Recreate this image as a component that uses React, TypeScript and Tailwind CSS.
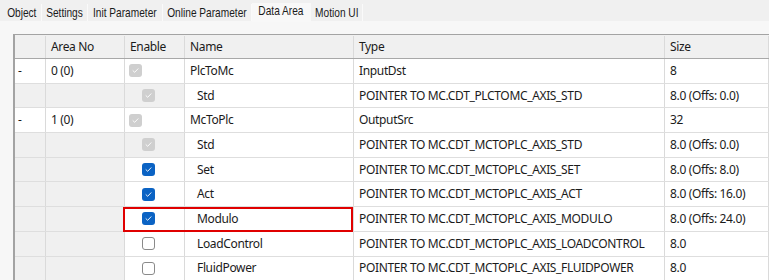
import React from "react";

type Check = "dis" | "on" | "off";

type Row = {
  dash: string;
  area: string;
  check: Check;
  sub: boolean;
  name: string;
  type: string;
  size: string;
  mark?: boolean;
};

const rows: Row[] = [
  { dash: "-", area: "0 (0)", check: "dis", sub: false, name: "PlcToMc", type: "InputDst", size: "8" },
  { dash: "", area: "", check: "dis", sub: true, name: "Std", type: "POINTER TO MC.CDT_PLCTOMC_AXIS_STD", size: "8.0 (Offs: 0.0)" },
  { dash: "-", area: "1 (0)", check: "dis", sub: false, name: "McToPlc", type: "OutputSrc", size: "32" },
  { dash: "", area: "", check: "dis", sub: true, name: "Std", type: "POINTER TO MC.CDT_MCTOPLC_AXIS_STD", size: "8.0 (Offs: 0.0)" },
  { dash: "", area: "", check: "on", sub: true, name: "Set", type: "POINTER TO MC.CDT_MCTOPLC_AXIS_SET", size: "8.0 (Offs: 8.0)" },
  { dash: "", area: "", check: "on", sub: true, name: "Act", type: "POINTER TO MC.CDT_MCTOPLC_AXIS_ACT", size: "8.0 (Offs: 16.0)" },
  { dash: "", area: "", check: "on", sub: true, name: "Modulo", type: "POINTER TO MC.CDT_MCTOPLC_AXIS_MODULO", size: "8.0 (Offs: 24.0)", mark: true },
  { dash: "", area: "", check: "off", sub: true, name: "LoadControl", type: "POINTER TO MC.CDT_MCTOPLC_AXIS_LOADCONTROL", size: "8.0" },
  { dash: "", area: "", check: "off", sub: true, name: "FluidPower", type: "POINTER TO MC.CDT_MCTOPLC_AXIS_FLUIDPOWER", size: "8.0" },
  { dash: "", area: "", check: "off", sub: true, name: "", type: "", size: "" },
];

const tabs = [
  { label: "Object", w: "w-[39px]" },
  { label: "Settings", w: "w-[46px]" },
  { label: "Init Parameter", w: "w-[75px]" },
  { label: "Online Parameter", w: "w-[89px]" },
  { label: "Data Area", w: "w-[59px]" },
  { label: "Motion UI", w: "w-[52px]" },
];

const cell = "flex items-center border-r border-[#dadada] px-[5px] whitespace-nowrap overflow-hidden";

function CheckBox({ kind }: { kind: Check }) {
  if (kind === "off") {
    return <span className="block w-[13px] h-[13px] rounded-[3px] border border-[#8a8a8a] bg-white" />;
  }
  const bg = kind === "on" ? "bg-[#0b63c4]" : "bg-[#cfcfcf]";
  return (
    <span className={`flex items-center justify-center w-[13px] h-[13px] rounded-[3px] ${bg}`}>
      <svg width="9" height="9" viewBox="0 0 9 9" fill="none">
        <path d="M2 4.7 L3.7 6.3 L7 2.8" stroke="#ffffff" strokeWidth="0.9" strokeLinecap="round" strokeLinejoin="round" />
      </svg>
    </span>
  );
}

export default function App() {
  return (
    <div className="w-[769px] h-[280px] overflow-hidden bg-[#f0f0f0] text-[#1b1b1b] font-['Noto_Sans','Open_Sans',sans-serif]">
      {/* tab strip */}
      <div className="flex h-[21px] items-end pl-[3px] font-['Liberation_Sans',sans-serif] text-[13px]">
        {tabs.map((t) => {
          const sel = t.label === "Data Area";
          return (
            <div
              key={t.label}
              className={
                sel
                  ? `${t.w} h-[19px] -mb-[1px] pb-[3px] bg-[#f8f8f8] flex items-center justify-center border-r border-[#f8f8f8]`
                  : `${t.w} h-[17px] pt-[1px] flex items-center justify-center border-r border-[#fafafa]`
              }
            >
              <span className="inline-block whitespace-nowrap scale-x-[0.78]">{t.label}</span>
            </div>
          );
        })}
      </div>

      {/* content */}
      <div className="bg-[#f7f7f7] pt-[13px] pl-[13px] h-[259px]">
        <div className="border-l-2 border-t border-[#a3a3a3] bg-white text-[12px] tracking-[-0.35px]">
          {/* header */}
          <div className="grid grid-cols-[31px_79px_60px_169px_311px_1fr] h-[24px] pt-[1px] bg-[#f0f0f0] border-b border-[#a8a8a8]">
            <div className={cell} />
            <div className={cell}>Area No</div>
            <div className={cell}>Enable</div>
            <div className={cell}>Name</div>
            <div className={cell}>Type</div>
            <div className={cell}>Size</div>
          </div>

          {rows.map((r, i) => {
            const grey = r.sub ? "bg-[#f0f0f0]" : "bg-white";
            const enGrey = r.check === "dis" && r.sub ? "bg-[#f0f0f0]" : "bg-white";
            return (
              <div
                key={i}
                className="relative grid grid-cols-[31px_79px_60px_169px_311px_1fr] h-[24.7px] border-b border-[#dedede]"
              >
                <div className={`${cell} ${grey} pl-[3px]`}>{r.dash}</div>
                <div className={`${cell} ${grey}`}>{r.area}</div>
                <div className={`${cell} ${enGrey} ${r.sub ? "pl-[17px]" : "pl-[4px]"}`}>
                  <CheckBox kind={r.check} />
                </div>
                <div className={`${cell} ${r.sub ? "pl-[12px]" : ""}`}>{r.name}</div>
                <div className={cell}>{r.type}</div>
                <div className={cell}>{r.size}</div>
                {r.mark && (
                  <div className="absolute left-[108px] top-0 w-[230px] h-[25px] border-2 border-[#e00000] pointer-events-none" />
                )}
              </div>
            );
          })}
        </div>
      </div>
    </div>
  );
}
